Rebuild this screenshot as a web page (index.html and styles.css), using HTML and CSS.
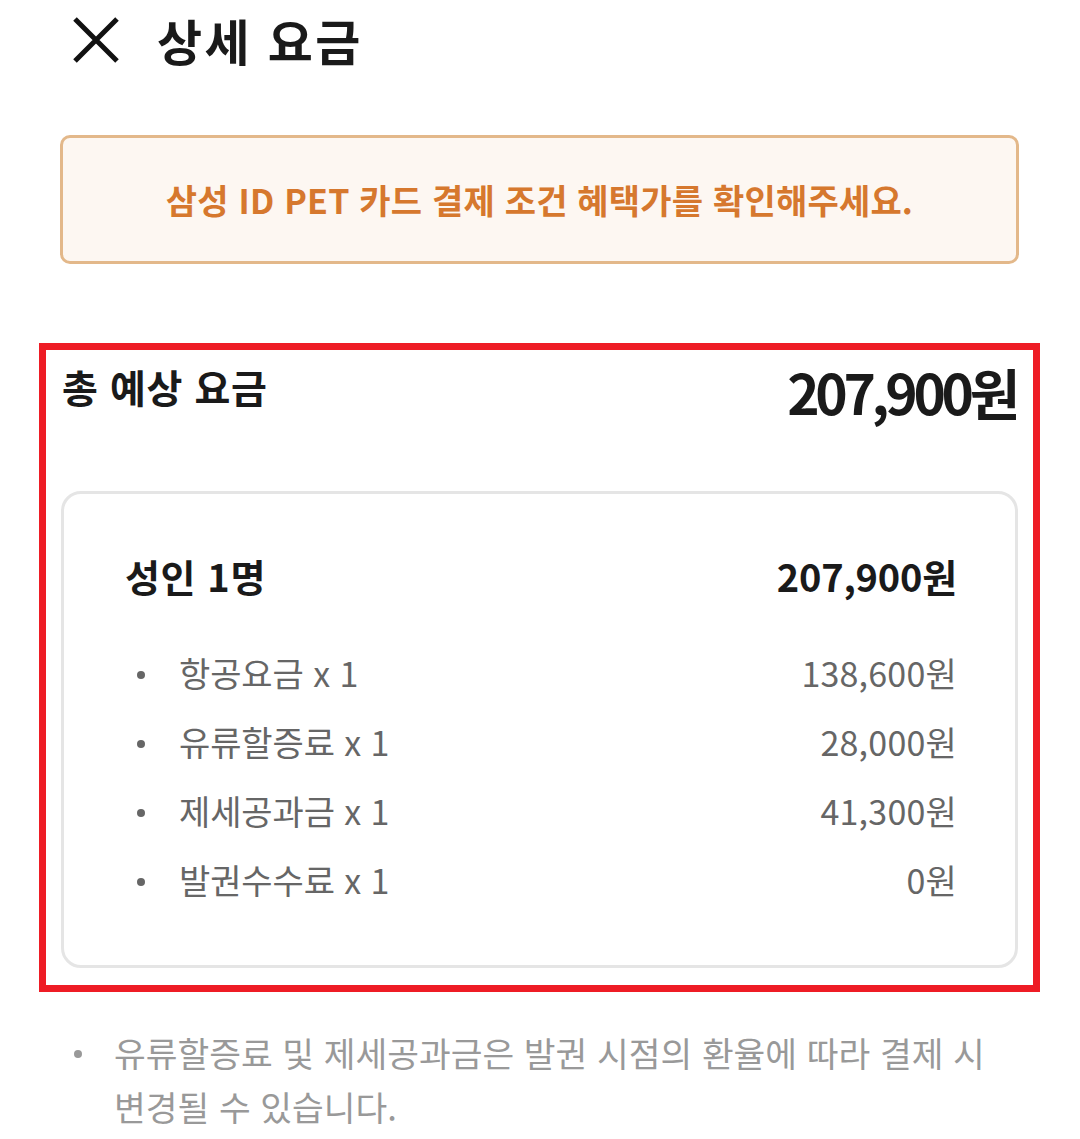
FILE: index.html
```html
<!DOCTYPE html>
<html lang="ko">
<head>
<meta charset="utf-8">
<link rel="stylesheet" href="styles.css">
</head>
<body>
<div class="page">
  <header class="header">
    <svg class="close" viewBox="0 0 48 48" width="48" height="48" aria-hidden="true">
      <path d="M3 3 L45 45 M45 3 L3 45" stroke="#111" stroke-width="5" stroke-linecap="butt" fill="none"/>
    </svg>
    <h1 class="title">상세 요금</h1>
  </header>

  <div class="notice">삼성 ID PET 카드 결제 조건 혜택가를 확인해주세요.</div>

  <section class="summary">
    <div class="total-row">
      <h2 class="total-label">총 예상 요금</h2>
      <div class="total-price">207,900원</div>
    </div>
    <div class="card">
      <div class="pax-row">
        <span class="pax-label">성인 1명</span>
        <span class="pax-price">207,900원</span>
      </div>
      <ul class="items">
        <li class="item"><span class="item-name">항공요금 x 1</span><span class="item-price">138,600원</span></li>
        <li class="item"><span class="item-name">유류할증료 x 1</span><span class="item-price">28,000원</span></li>
        <li class="item"><span class="item-name">제세공과금 x 1</span><span class="item-price">41,300원</span></li>
        <li class="item"><span class="item-name">발권수수료 x 1</span><span class="item-price">0원</span></li>
      </ul>
    </div>
  </section>

  <ul class="notes">
    <li class="note">유류할증료 및 제세공과금은 발권 시점의 환율에 따라 결제 시 변경될 수 있습니다.</li>
  </ul>
</div>
</body>
</html>
```

FILE: styles.css
```css
* { box-sizing: border-box; }
html, body { margin: 0; padding: 0; background: #fff; }
body {
  font-family: "Noto Sans CJK KR", "Noto Sans", sans-serif;
  color: #1a1a1a;
  width: 1080px;
  overflow: hidden;
}
.page {
  padding: 0 61px 0 60px;
}
.header {
  display: flex;
  align-items: center;
  height: 80px;
  gap: 37px;
  padding-left: 12px;
}
.close { flex: none; display: block; }
.title {
  margin: 0;
  font-size: 49px;
  font-weight: 700;
  letter-spacing: 2.3px;
  line-height: 1;
  margin-top: -2px;
}
.notice {
  margin-top: 55px;
  height: 129px;
  border: 3px solid #e3b88a;
  border-radius: 10px;
  background: #fdf7f2;
  color: #d6782e;
  font-size: 34px;
  font-weight: 700;
  display: flex;
  align-items: center;
  justify-content: center;
  letter-spacing: 0.2px;
}
.summary {
  margin: 79px -21px 0 -21px;
  border: 7px solid #ee1c25;
  padding: 8px 15px 17px 15px;
}
.total-row {
  display: flex;
  justify-content: space-between;
  align-items: flex-start;
}
.total-label {
  margin: 0;
  font-size: 39px;
  font-weight: 700;
  line-height: 56px;
  padding-left: 1px;
  letter-spacing: 0.6px;
}
.total-price {
  font-size: 55px;
  font-weight: 700;
  line-height: 66px;
  letter-spacing: -4.3px;
  margin-right: 2px;
}
.card {
  margin-top: 67px;
  border: 3px solid #e5e5e5;
  border-radius: 20px;
  padding: 54px 61px 51px 61px;
}
.pax-row {
  display: flex;
  justify-content: space-between;
  align-items: center;
  font-size: 38px;
  font-weight: 700;
  line-height: 56px;
  margin-right: -3px;
}
.pax-label { letter-spacing: 0.6px; }
.pax-price { letter-spacing: -0.2px; }
.items {
  list-style: none;
  margin: 34px -3px 0 0;
  padding: 0;
}
.item {
  display: flex;
  justify-content: space-between;
  align-items: center;
  height: 69px;
  font-size: 34px;
  color: #666;
  position: relative;
  padding-left: 54px;
}
.item::before {
  content: "";
  position: absolute;
  left: 12px;
  top: 50%;
  width: 8px;
  height: 8px;
  margin-top: -2px;
  border-radius: 50%;
  background: #666;
}
.item-name { letter-spacing: -0.1px; }
.item-price { letter-spacing: 0.2px; }
.notes {
  list-style: none;
  margin: 33px 0 0 0;
  padding: 0;
}
.note {
  position: relative;
  padding-left: 54px;
  margin-right: -20px;
  font-size: 34.5px;
  line-height: 54px;
  color: #999;
  word-break: keep-all;
}
.note::before {
  content: "";
  position: absolute;
  left: 14px;
  top: 27px;
  width: 8px;
  height: 8px;
  margin-top: -2px;
  border-radius: 50%;
  background: #999;
}
```
